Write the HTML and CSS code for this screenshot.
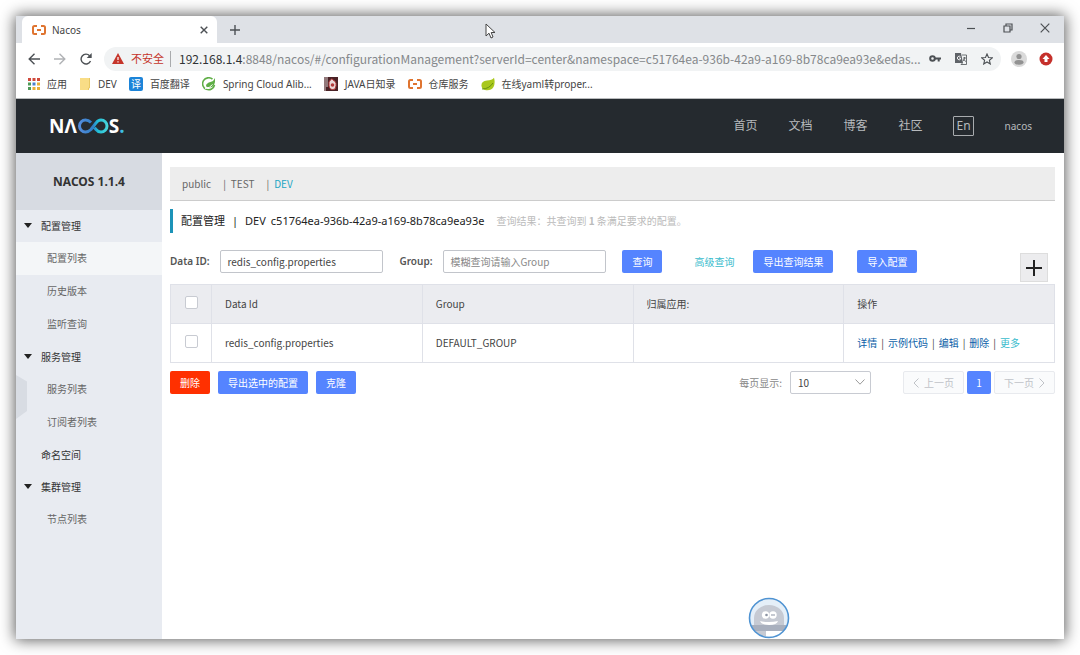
FILE: index.html
```html
<!DOCTYPE html>
<html lang="zh-CN">
<head>
<meta charset="utf-8">
<title>Nacos</title>
<link rel="stylesheet" href="styles.css">
</head>
<body>
<div class="window">
  <div class="tabstrip">
    <div class="tab">
      <svg class="favicon" viewBox="0 0 14 10"><path d="M5 1H2.5Q1 1 1 2.500V7.500Q1 9 2.500 9H5M9 1H11.500Q13 1 13 2.500V7.500Q13 9 11.500 9H9M5 5H9" /></svg>
      <span class="tab-name">Nacos</span>
      <button class="plain" aria-label="关闭标签页"><svg class="ic8" viewBox="0 0 8 8"><path d="M.7.7L7.300 7.300M7.300.7L.7 7.300"/></svg></button>
    </div>
    <button class="plain new-tab" aria-label="新标签页"><svg class="ic10" viewBox="0 0 10 10"><path d="M5 0V10M0 5H10"/></svg></button>
    <div class="win-controls">
      <button class="plain" aria-label="最小化"><svg class="ic10 thin" viewBox="0 0 10 10"><path d="M1 5.500H9"/></svg></button>
      <button class="plain" aria-label="还原"><svg class="ic10 thin" viewBox="0 0 10 10"><path d="M1 3H7V9H1ZM3 3V1H9V7H7"/></svg></button>
      <button class="plain" aria-label="关闭"><svg class="ic10 thin" viewBox="0 0 10 10"><path d="M.7.7L9.300 9.300M9.300.7L.7 9.300"/></svg></button>
    </div>
  </div>

  <div class="toolbar">
    <button class="plain" aria-label="后退"><svg class="ic12" viewBox="0 0 12 12"><path d="M6.500.8L1.200 6L6.500 11.200M1.200 6H12"/></svg></button>
    <button class="plain faded" aria-label="前进"><svg class="ic12" viewBox="0 0 12 12"><path d="M5.500.8L10.800 6L5.500 11.200M10.800 6H0"/></svg></button>
    <button class="plain" aria-label="刷新"><svg class="ic12" viewBox="0 0 12 12"><path d="M10.500 8A4.900 4.900 0 1 1 9.600 2.700"/><path class="solid" d="M11.700 0V5H6.700Z"/></svg></button>
    <div class="omnibox">
      <svg class="warn" viewBox="0 0 12 11"><path d="M6 0L12 11H0Z" fill="#c5352b"/><path d="M6 4V7M6 8.200V9.500" stroke="#fff" stroke-width="1.200"/></svg>
      <span class="insecure">不安全</span>
      <span class="url"><span class="host">192.168.1.4</span>:8848/nacos/#/configurationManagement?serverId=center&amp;namespace=c51764ea-936b-42a9-a169-8b78ca9ea93e&amp;edas...</span>
      <button class="plain" aria-label="密码"><svg class="key" viewBox="0 0 12 7"><circle cx="3.500" cy="3.500" r="2.300"/><path d="M6 3.500H12M9.700 3.500V6.500"/></svg></button>
      <button class="plain" aria-label="翻译"><svg class="ic12" viewBox="0 0 12 12"><path d="M0 0H6L8 10H0Z" fill="#5f6368" stroke="none"/><path d="M7 2H11.500V11.500H6L7.500 10M8 5H11M9.500 4V5Q9.500 7 8 8M8.500 6Q9.500 8 11 8.500" stroke-width=".8"/><path d="M5.500 3.800A1.800 1.800 0 1 0 5.500 6.200V5H4" stroke="#fff" stroke-width=".9"/></svg></button>
      <button class="plain" aria-label="收藏"><svg class="ic12" viewBox="0 0 12 12"><path stroke-width="1.100" d="M6 1L7.500 4.500L11.300 4.800L8.400 7.300L9.300 11L6 9L2.700 11L3.600 7.300L.7 4.800L4.500 4.500Z"/></svg></button>
    </div>
    <button class="plain" aria-label="账户"><svg class="ic16" viewBox="0 0 16 16"><circle cx="8" cy="8" r="8" fill="#dadada" stroke="none"/><circle cx="8" cy="5.500" r="2.600" fill="#929292" stroke="none"/><ellipse cx="8" cy="11.300" rx="4.500" ry="2.400" fill="#929292" stroke="none"/></svg></button>
    <button class="plain" aria-label="更新"><svg class="ic14" viewBox="0 0 14 14"><circle cx="7" cy="7" r="6.500" fill="#c5302b" stroke="none"/><path d="M7 3L10.500 7H8.500V10H5.500V7H3.500Z" fill="#fff" stroke="none"/></svg></button>
  </div>

  <nav class="bookmarks" aria-label="书签">
    <a href="#"><svg class="ic12" viewBox="0 0 12 12"><path fill="#d04a3c" stroke="none" d="M0 0h3v3H0zM4.500 0h3v3h-3zM9 0h3v3H9z"/><path fill="#4e9a58" stroke="none" d="M0 4.500h3v3H0z"/><path fill="#4a80d0" stroke="none" d="M4.500 4.500h3v3h-3z"/><path fill="#e8ae38" stroke="none" d="M9 4.500h3v3H9zM4.500 9h3v3h-3zM9 9h3v3H9z"/><path fill="#4e9a58" stroke="none" d="M0 9h3v3H0z"/></svg>应用</a>
    <a href="#"><svg class="ic12" viewBox="0 0 12 12"><path d="M1 0H11V10H10V12H1Z" fill="#f9dd86" stroke="none"/><path d="M10.500 0V10H9.500V12" stroke="#e8c866" stroke-width="1"/></svg>DEV</a>
    <a href="#"><span class="yi">译</span>百度翻译</a>
    <a href="#"><svg class="ic14" viewBox="0 0 14 14"><path d="M12.500 8A6 6 0 1 1 10.500 2.200" stroke="#5fae46" stroke-width="1.600"/><path d="M13 1Q14 11 6.500 10.500Q4 10.500 4 8.500Q4.500 6 8.500 5Q12 4 13 1Z" fill="#5fae46" stroke="none"/><path d="M3 11.500Q8 11 10.500 7.500" stroke="#fff" stroke-width="1"/></svg>Spring Cloud Alib...</a>
    <a href="#"><svg class="ic14" viewBox="0 0 14 14"><path d="M0 0H14V14H0Z" fill="#4a2226" stroke="none"/><path d="M3 0V10M1 0V14" stroke="#d9cfcf" stroke-width="1"/><path d="M5 5Q8 0 9 3Q14 5 11 12Q6 14 5 9Z" fill="#e9d8d8" stroke="#b33a3a" stroke-width="1"/><circle cx="8.500" cy="8" r="1.800" fill="#b33a3a" stroke="none"/></svg>JAVA日知录</a>
    <a href="#"><svg class="favicon" viewBox="0 0 14 10"><path d="M5 1H2.500Q1 1 1 2.500V7.500Q1 9 2.500 9H5M9 1H11.500Q13 1 13 2.500V7.500Q13 9 11.500 9H9M5 5H9"/></svg>仓库服务</a>
    <a href="#"><svg class="ic14" viewBox="0 0 14 14"><path d="M.5 9Q0 4 6 3.500Q11 3.500 13 .8Q14.500 6 12.500 10Q10 14 4 13Q1 12.500 .5 9Z" fill="#a9c81c" stroke="none"/><path d="M1 12Q8 12 12 6" stroke="#5f8c10" stroke-width=".9"/></svg>在线yaml转proper...</a>
  </nav>

  <header class="site-header">
    <a class="logo" href="#" aria-label="Nacos"><span>N</span><span>Λ</span><svg viewBox="0 0 32 16"><defs><linearGradient id="flow" gradientUnits="userSpaceOnUse" x1="0" y1="0" x2="32" y2="0"><stop offset="0" stop-color="#5b8fe0"/><stop offset=".5" stop-color="#2f7fc6"/><stop offset=".65" stop-color="#20bfd8"/><stop offset="1" stop-color="#4fd8dc"/></linearGradient></defs><path d="M14 4.500Q11.500 2 8.500 2A6 6 0 0 0 8.500 14Q11.500 14 14 11.500L19 5Q21 2 24 2A6 6 0 0 1 24 14Q21 14 19 11.500L17.500 9.700" fill="none" stroke="url(#flow)" stroke-width="3"/></svg><span>S</span><span class="dot">.</span></a>
    <nav class="site-nav">
      <a href="#">首页</a><a href="#">文档</a><a href="#">博客</a><a href="#">社区</a>
      <button class="lang">En</button>
      <a class="user" href="#">nacos</a>
    </nav>
  </header>

  <div class="body">
    <aside class="sidebar">
      <h1 class="version">NACOS 1.1.4</h1>
      <ul class="menu">
        <li><a class="group open" href="#">配置管理</a>
          <ul><li><a class="active" href="#">配置列表</a></li><li><a href="#">历史版本</a></li><li><a href="#">监听查询</a></li></ul></li>
        <li><a class="group open" href="#">服务管理</a>
          <ul><li><a href="#">服务列表</a></li><li><a href="#">订阅者列表</a></li></ul></li>
        <li><a class="group" href="#">命名空间</a></li>
        <li><a class="group open" href="#">集群管理</a>
          <ul><li><a href="#">节点列表</a></li></ul></li>
      </ul>
      <button class="collapse" aria-label="收起菜单"></button>
    </aside>

    <main class="main">
      <nav class="namespaces"><a href="#">public</a><a href="#">TEST</a><a class="current" href="#">DEV</a></nav>
      <div class="heading">
        <h2>配置管理<span class="sep">|</span>DEV<span class="ns-id">c51764ea-936b-42a9-a169-8b78ca9ea93e</span></h2>
        <p>查询结果：共查询到 <strong>1</strong> 条满足要求的配置。</p>
      </div>
      <form class="search">
        <label for="data-id">Data ID:</label>
        <input class="field" id="data-id" type="text" value="redis_config.properties">
        <label class="group-label" for="group">Group:</label>
        <input class="field" id="group" type="text" placeholder="模糊查询请输入Group">
        <button class="btn query" type="button">查询</button>
        <a class="advanced" href="#">高级查询</a>
        <button class="btn" type="button">导出查询结果</button>
        <button class="btn import" type="button">导入配置</button>
        <button class="add" type="button" aria-label="新建配置"><svg viewBox="0 0 16 16"><path d="M8 0V16M0 8H16"/></svg></button>
      </form>
      <table class="configs">
        <thead><tr><th class="check"><input type="checkbox" aria-label="全选"></th><th>Data Id</th><th>Group</th><th>归属应用:</th><th>操作</th></tr></thead>
        <tbody><tr><td class="check"><input type="checkbox" aria-label="选择 redis_config.properties"></td><td>redis_config.properties</td><td>DEFAULT_GROUP</td><td></td>
          <td class="actions"><a href="#">详情</a><i>|</i><a href="#">示例代码</a><i>|</i><a href="#">编辑</a><i>|</i><a href="#">删除</a><i>|</i><a class="more" href="#">更多</a></td></tr></tbody>
      </table>
      <div class="footer">
        <button class="btn danger">删除</button>
        <button class="btn">导出选中的配置</button>
        <button class="btn">克隆</button>
        <label class="size-label" for="size">每页显示:</label>
        <span class="select"><select id="size"><option>10</option></select><svg viewBox="0 0 10 6"><path d="M.5.5L5 5.200L9.500.5"/></svg></span>
        <div class="pager">
          <button class="page" disabled><svg viewBox="0 0 6 10"><path d="M5.500.5L1 5L5.500 9.500"/></svg>上一页</button>
          <button class="btn number">1</button>
          <button class="page" disabled>下一页<svg viewBox="0 0 6 10"><path d="M.5.5L5 5L.5 9.500"/></svg></button>
        </div>
      </div>
    </main>
  </div>
  <svg class="cursor" viewBox="0 0 11 16"><path d="M1 1V13L4 10.200L6 15L8 14L6.200 9.500H10Z" fill="#fff" stroke="#444"/></svg>
  <button class="plain robot" aria-label="助手"><svg viewBox="0 0 42 42"><defs><clipPath id="face"><circle cx="21" cy="21" r="19"/></clipPath></defs><circle cx="21" cy="21" r="20" fill="#e5eff8" stroke="none"/><g clip-path="url(#face)" stroke="none"><path d="M6 28V21A15 13 0 0 1 36 21V28Z" fill="#c6cad3"/><path d="M4 28H38V34H4Z" fill="#a9b0be"/><path d="M8 34H18V42H8Z" fill="#c6cad3"/><path d="M18 34H36V39H18Z" fill="#fff"/><circle cx="17.500" cy="18" r="3.700" fill="#fff"/><circle cx="25" cy="18" r="3.700" fill="#fff"/><circle cx="18.500" cy="18" r="1.300" fill="#8b93a3"/><path d="M23 18H27" stroke="#8b93a3" stroke-width="1"/><path d="M12 24Q21 26 30 24Q29 28 21 28Q13 28 12 24Z" fill="#fff"/></g><circle cx="21" cy="21" r="19.500" fill="none" stroke="#4f93d2" stroke-width="1.600"/></svg></button>
</div>
</body>
</html>
```

FILE: styles.css
```css
* { box-sizing: border-box; }
body {
  margin: 0;
  min-height: 100vh;
  padding: 16px;
  display: flex;
  background: #fff;
  font: 10px/16px "Noto Sans", "Noto Sans CJK SC", sans-serif;
  color: #444;
}
a { color: inherit; text-decoration: none; }
button, input, select { font: inherit; color: inherit; margin: 0; }
ul { list-style: none; margin: 0; padding: 0; }
h1, h2, p { margin: 0; }
svg { display: block; flex: none; fill: none; stroke: currentColor; stroke-width: 1.4; }

.window {
  position: relative;
  flex: 1;
  min-width: 0;
  display: flex;
  flex-direction: column;
  background: #fff;
  box-shadow: 0 0 14px 1px rgba(0, 0, 0, .65);
}
.plain { border: 0; padding: 0; background: none; color: #4c5054; flex: none; }
.ic8 { width: 8px; height: 8px; }
.ic10 { width: 10px; height: 10px; }
.ic12 { width: 12px; height: 12px; }
.ic14 { width: 14px; height: 14px; }
.ic16 { width: 16px; height: 16px; }
.thin { stroke-width: 1.2; }
.favicon { width: 14px; height: 10px; stroke: #df7430; stroke-width: 2; }

/* Browser chrome */
.tabstrip { display: flex; height: 27px; background: #dee1e6; }
.tab { display: flex; align-items: center; width: 195px; margin-left: 6px; padding: 0 9px 0 10px; background: #fff; border-radius: 6px 6px 0 0; }
.tab-name { flex: 1; margin-left: 6px; font-size: 10px; }
.new-tab { margin-left: 13px; }
.win-controls { display: flex; align-items: center; gap: 27px; margin-left: auto; padding: 0 14px 4px; color: #222; }
.toolbar { display: flex; align-items: center; gap: 14px; height: 31px; padding: 0 11px 0 12px; }
.faded { color: #b0b2b5; }
.toolbar .solid { fill: currentColor; stroke: none; }
.omnibox { display: flex; align-items: center; flex: 1; min-width: 0; height: 24px; margin: 0 -4px 0 -2px; padding: 0 8px; border-radius: 12px; background: #f1f3f4; }
.insecure { margin-left: 7px; padding-right: 6px; border-right: 1px solid #a9abad; color: #c5352b; font-size: 11px; }
.warn { width: 12px; height: 11px; stroke: none; }
.url { flex: 1; min-width: 0; margin: 0 8px; overflow: hidden; white-space: nowrap; color: #85888b; font: 12px/18px "Noto Sans CJK SC", sans-serif; }
.host { color: #303336; }
.key { width: 12px; height: 7px; stroke-width: 2; }
.omnibox button + button { margin-left: 14px; }
.toolbar > button:last-child { margin-left: -2px; }
.bookmarks { display: flex; align-items: center; gap: 12px; height: 25px; padding: 0 12px 4px; border-bottom: 1px solid #b9bbbd; }
.bookmarks a { display: flex; align-items: center; gap: 7px; white-space: nowrap; }
.yi { width: 14px; height: 14px; border-radius: 2px; background: #1c84d8; color: #fff; line-height: 14px; text-align: center; }

/* Site header */
.site-header { display: flex; align-items: center; justify-content: space-between; height: 54px; padding: 0 32px 0 33px; background: #252a2f; color: #b7babd; }
.logo { display: flex; align-items: center; color: #fff; font: 700 19px/20px "Open Sans", sans-serif; }
.logo svg { width: 32px; height: 16px; }
.logo .dot { color: #3fbfe0; }
.site-nav { display: flex; align-items: center; gap: 31px; font-size: 12px; }
.lang { height: 20px; padding: 0 2px; border: 1px solid #a8abae; border-radius: 1px; background: none; }
.user { font-size: 10px; }

/* Sidebar */
.body { flex: 1; display: flex; }
.sidebar { position: relative; flex: none; width: 146px; background: #e8ebf1; }
.version { height: 57px; background: #d7dbe2; color: #333; font-size: 12px; line-height: 57px; text-align: center; }
.menu a { display: block; padding-left: 31px; line-height: 33px; color: #666; }
.menu .group { position: relative; padding-left: 25px; line-height: 32px; color: #333; }
.menu .open::before { content: ""; position: absolute; left: 8px; top: 13px; border: 4px solid transparent; border-top: 5px solid #222; border-bottom: 0; }
.menu .active { background: #f4f6f8; }
.collapse { position: absolute; left: 0; top: 222px; width: 11px; height: 44px; padding: 0; border: 0; background: #d8dce3; clip-path: polygon(0 0, 100% 15%, 100% 82%, 0 100%); }

/* Content */
.main { flex: 1; min-width: 0; padding: 14px 9px 0 8px; font-family: "Noto Sans CJK SC", sans-serif; }
.namespaces { display: flex; align-items: center; height: 34px; padding-left: 12px; border-bottom: 1px solid #ccc; background: #ededed; color: #666; }
.namespaces a + a { margin-left: 12px; }
.namespaces a + a::before { content: "|"; margin-right: 5px; color: #666; }
.namespaces .current { color: #22a5c4; }
.heading { display: flex; align-items: center; height: 24px; margin-top: 8px; padding-left: 8px; border-left: 3px solid #1c93b8; }
.heading h2 { font-family: "Noto Sans", "Noto Sans CJK SC", sans-serif; font-size: 11px; font-weight: 400; color: #222; white-space: nowrap; }
.sep { margin: 0 7px; }
.ns-id { margin-left: 5px; }
.heading p { margin-left: 12px; color: #bbb; }
.search { display: flex; align-items: flex-start; height: 34px; margin-top: 17px; }
.search label { font-family: "Noto Sans", sans-serif; line-height: 23px; font-weight: 600; color: #555; white-space: nowrap; }
.field { width: 163px; height: 23px; margin-left: 11px; padding: 0 6px; border: 1px solid #c2c5cb; border-radius: 2px; background: #fff; }
.field::placeholder { color: #888; opacity: 1; }
.search .group-label { margin-left: 16px; }
.btn { height: 23px; padding: 0 10px; border: 0; border-radius: 2px; background: #5584ff; color: #fff; white-space: nowrap; }
.query { margin-left: 16px; }
.advanced { margin: 0 19px 0 32px; line-height: 23px; color: #3abccd; white-space: nowrap; }
.import { margin-left: 24px; }
.add { align-self: flex-end; display: grid; place-items: center; width: 28px; height: 29px; margin: 0 7px 2px auto; padding: 0; border: 1px solid #ddd; background: #ececee; color: #222; }
.add svg { width: 16px; height: 16px; stroke-width: 2; }
.configs { width: 100%; border-collapse: collapse; table-layout: fixed; }
.configs th, .configs td { height: 39px; padding: 0 13px; border: 1px solid #dfe1e8; font-weight: 400; text-align: left; white-space: nowrap; }
.configs th { background: #ebecf0; }
.configs .check { width: 41px; padding: 0; text-align: center; }
.check input { appearance: none; display: block; width: 13px; height: 13px; margin: -3px auto 0; border: 1px solid #c8cbd2; border-radius: 2px; background: #fff; }
.actions a { color: #0c5fa8; }
.actions i { margin: 0 4px; font-style: normal; }
.actions .more { color: #3abccd; }
.footer { display: flex; align-items: center; gap: 8px; margin-top: 8px; }
.danger { background: #ff3000; }
.size-label { margin-left: auto; color: #888; }
.select { position: relative; width: 81px; }
.select select { appearance: none; display: block; width: 100%; height: 23px; padding: 0 7px; border: 1px solid #c8cbd2; border-radius: 2px; background: #fff; }
.select svg { position: absolute; right: 6px; top: 8px; width: 10px; height: 6px; color: #999; stroke-width: 1; pointer-events: none; }
.pager { display: flex; gap: 3px; margin-left: 24px; }
.number { width: 24px; padding: 0; }
.page { display: flex; align-items: center; gap: 5px; height: 23px; padding: 0 9px; border: 1px solid #e8eaee; border-radius: 2px; background: #fafbfc; color: #c0c3c8; white-space: nowrap; }
.page svg { width: 6px; height: 10px; stroke-width: 1; }

/* Overlays */
.cursor { position: absolute; left: 469px; top: 7px; width: 11px; height: 16px; stroke-width: 1; }
.robot { position: absolute; right: 274px; bottom: 0; width: 42px; height: 42px; }
```
